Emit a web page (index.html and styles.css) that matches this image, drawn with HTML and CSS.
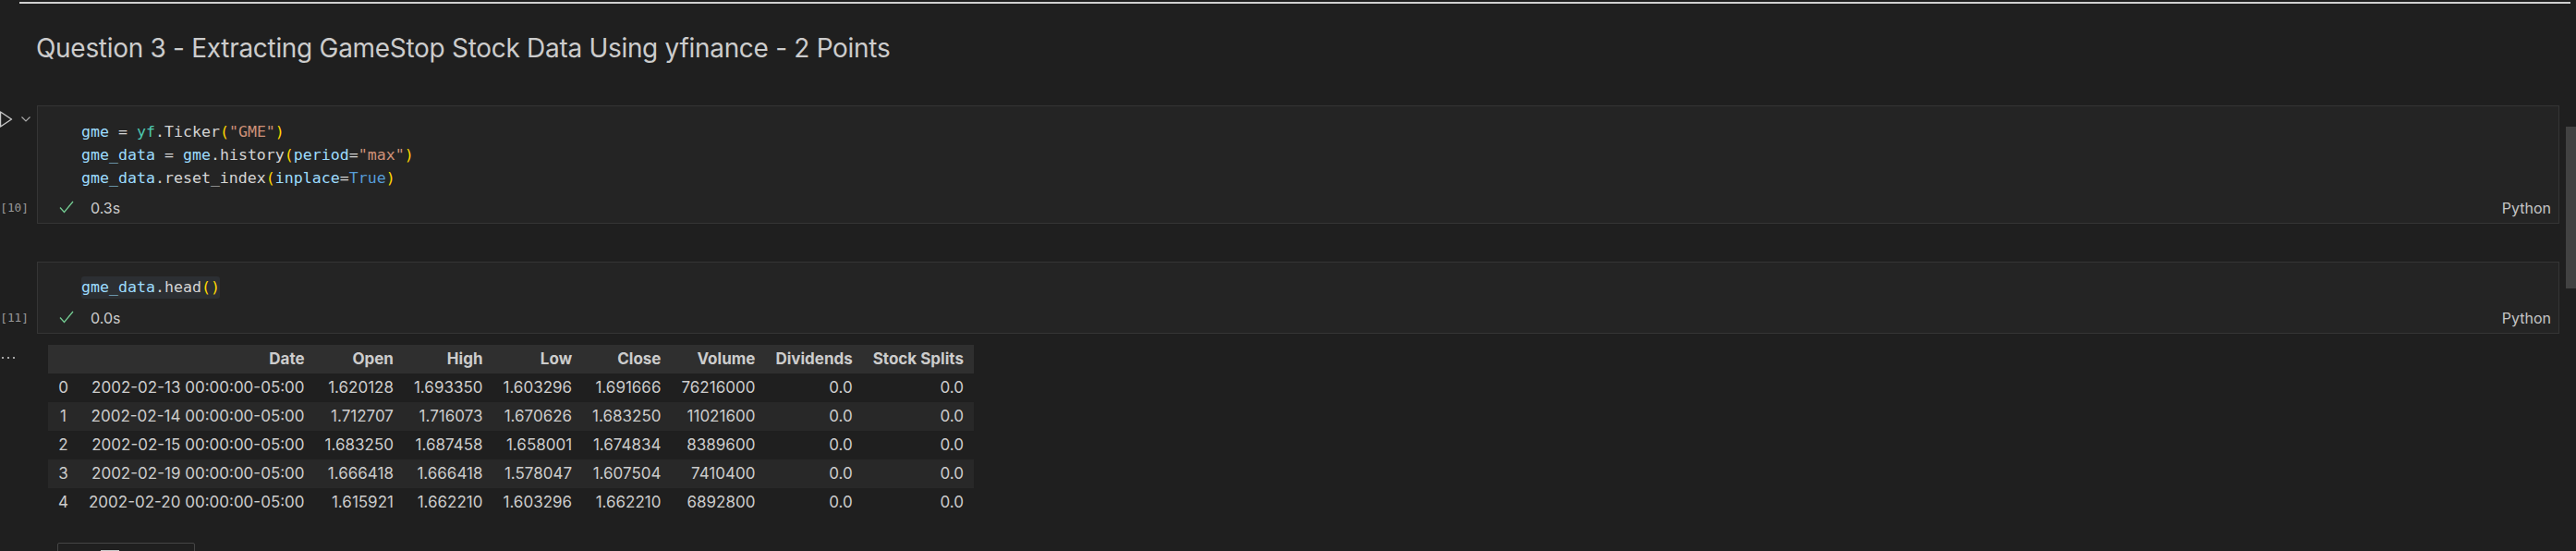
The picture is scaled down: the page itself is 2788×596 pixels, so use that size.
FILE: index.html
```html
<!DOCTYPE html>
<html lang="en">
<head>
<meta charset="utf-8">
<title>Notebook</title>
<link rel="stylesheet" href="styles.css">
</head>
<body>
<div class="page">
  <div class="rule"></div>
  <div class="md">
    <h2 class="md-title">Question 3 - Extracting GameStop Stock Data Using yfinance - 2 Points</h2>
  </div>

  <div class="cell-row first">
    <div class="gutter">
      <div class="run-tools">
        <svg class="run-icon" width="16" height="18" viewBox="0 0 16 18"><polygon points="1.5,1 13.5,9 1.5,17" fill="none" stroke="#c8c8c8" stroke-width="1.4" stroke-linejoin="round"/></svg>
        <svg class="chev-icon" width="12" height="8" viewBox="0 0 12 8"><polyline points="1.5,1.5 6,6 10.5,1.5" fill="none" stroke="#a8a8a8" stroke-width="1.2"/></svg>
      </div>
      <div class="count">[10]</div>
    </div>
    <div class="cell">
      <div class="code">
        <div class="ln"><span class="v">gme</span> <span class="p">=</span> <span class="m">yf</span><span class="p">.Ticker</span><span class="b">(</span><span class="s">"GME"</span><span class="b">)</span></div>
        <div class="ln"><span class="v">gme_data</span> <span class="p">=</span> <span class="v">gme</span><span class="p">.history</span><span class="b">(</span><span class="v">period</span><span class="p">=</span><span class="s">"max"</span><span class="b">)</span></div>
        <div class="ln"><span class="v">gme_data</span><span class="p">.reset_index</span><span class="b">(</span><span class="v">inplace</span><span class="p">=</span><span class="k">True</span><span class="b">)</span></div>
      </div>
      <div class="status">
        <svg class="check" width="16" height="14" viewBox="0 0 16 14"><polyline points="1,7.5 5.5,12.5 15,1" fill="none" stroke="#73c991" stroke-width="1.3"/></svg>
        <span class="time">0.3s</span>
        <span class="lang">Python</span>
      </div>
    </div>
  </div>

  <div class="cell-row second">
    <div class="gutter">
      <div class="run-tools"></div>
      <div class="count">[11]</div>
    </div>
    <div class="cell">
      <div class="code">
        <div class="ln"><span class="hl"><span class="v">gme_data</span><span class="p">.head</span><span class="b">()</span></span></div>
      </div>
      <div class="status">
        <svg class="check" width="16" height="14" viewBox="0 0 16 14"><polyline points="1,7.5 5.5,12.5 15,1" fill="none" stroke="#73c991" stroke-width="1.3"/></svg>
        <span class="time">0.0s</span>
        <span class="lang">Python</span>
      </div>
    </div>
  </div>

  <div class="output-row">
    <div class="out-gutter">
      <svg width="18" height="4" viewBox="0 0 18 4"><circle cx="3" cy="2" r="1.1" fill="#c8c8c8"/><circle cx="9" cy="2" r="1.1" fill="#c8c8c8"/><circle cx="15" cy="2" r="1.1" fill="#c8c8c8"/></svg>
    </div>
    <div class="output">
      <table class="df">
        <thead>
          <tr><th></th><th>Date</th><th>Open</th><th>High</th><th>Low</th><th>Close</th><th>Volume</th><th>Dividends</th><th>Stock Splits</th></tr>
        </thead>
        <tbody>
          <tr><td class="idx">0</td><td>2002-02-13 00:00:00-05:00</td><td>1.620128</td><td>1.693350</td><td>1.603296</td><td>1.691666</td><td>76216000</td><td>0.0</td><td>0.0</td></tr>
          <tr><td class="idx">1</td><td>2002-02-14 00:00:00-05:00</td><td>1.712707</td><td>1.716073</td><td>1.670626</td><td>1.683250</td><td>11021600</td><td>0.0</td><td>0.0</td></tr>
          <tr><td class="idx">2</td><td>2002-02-15 00:00:00-05:00</td><td>1.683250</td><td>1.687458</td><td>1.658001</td><td>1.674834</td><td>8389600</td><td>0.0</td><td>0.0</td></tr>
          <tr><td class="idx">3</td><td>2002-02-19 00:00:00-05:00</td><td>1.666418</td><td>1.666418</td><td>1.578047</td><td>1.607504</td><td>7410400</td><td>0.0</td><td>0.0</td></tr>
          <tr><td class="idx">4</td><td>2002-02-20 00:00:00-05:00</td><td>1.615921</td><td>1.662210</td><td>1.603296</td><td>1.662210</td><td>6892800</td><td>0.0</td><td>0.0</td></tr>
        </tbody>
      </table>
      <div class="wrangler">
        <svg class="wr-arrow" width="8" height="8" viewBox="0 0 8 8"><polyline points="1,6 4,2 7,6" fill="none" stroke="#c8c8c8" stroke-width="1.3"/></svg>
        <span class="wr-grid"></span>
        <svg class="wr-arrow" width="8" height="8" viewBox="0 0 8 8"><polyline points="1,6 4,2 7,6" fill="none" stroke="#c8c8c8" stroke-width="1.3"/></svg>
      </div>
    </div>
  </div>

  <div class="scrollbar"></div>
</div>
</body>
</html>
```

FILE: styles.css
```css
html, body {
  margin: 0;
  padding: 0;
  background: #1f1f1f;
}

.page {
  position: relative;
  width: 2788px;
  height: 596px;
  overflow: hidden;
  background: #1f1f1f;
  color: #cccccc;
  font-family: Inter, "Noto Sans", sans-serif;
}

.rule {
  height: 2px;
  margin: 2px 6px 0 21px;
  background: #cfcfcf;
}

.md {
  padding-left: 39px;
}

.md-title {
  margin: 30px 0 0 0;
  font-size: 28px;
  line-height: 36px;
  font-weight: 400;
  color: #cccccc;
  letter-spacing: -0.3px;
}

.cell-row {
  display: flex;
  margin-right: 18px;
}

.cell-row.first {
  margin-top: 44px;
}

.cell-row.second {
  margin-top: 41px;
}

.gutter {
  width: 40px;
  flex: none;
  display: flex;
  flex-direction: column;
  justify-content: space-between;
}

.run-tools {
  display: flex;
  align-items: flex-start;
  padding-top: 6px;
  height: 20px;
}

.run-icon {
  margin-left: -1px;
}

.chev-icon {
  margin-left: 7px;
  margin-top: 5px;
}

.count {
  font-family: "DejaVu Sans Mono", monospace;
  font-size: 12.8px;
  color: #9a9a9a;
  text-align: right;
  padding-right: 9px;
  line-height: 22px;
  margin-bottom: 6px;
  white-space: nowrap;
}

.cell {
  flex: 1;
  background: #242424;
  border: 1px solid #353535;
  padding: 15px 8px 5px 0;
}

.code {
  padding-left: 47px;
  font-family: "DejaVu Sans Mono", monospace;
  font-size: 16.6px;
  line-height: 25px;
  color: #d4d4d4;
}

.ln {
  height: 25px;
  white-space: pre;
}

.v { color: #9cdcfe; }
.p { color: #d4d4d4; }
.m { color: #4ec9b0; }
.s { color: #ce9178; }
.b { color: #ffd700; }
.k { color: #569cd6; }

.hl {
  display: inline-block;
  background: #2c2f33;
  border-radius: 3px;
  line-height: 24px;
  vertical-align: top;
}

.status {
  display: flex;
  align-items: center;
  height: 22px;
  margin-top: 9px;
  font-size: 16px;
  line-height: 22px;
  color: #cccccc;
}

.check {
  margin-left: 23px;
  margin-top: -2px;
}

.time {
  margin-left: 18px;
}

.lang {
  margin-left: auto;
  color: #c4c4c4;
}

.output-row {
  display: flex;
  margin-top: 12px;
}

.out-gutter {
  width: 40px;
  flex: none;
  padding-top: 12px;
}

.out-gutter svg {
  display: block;
}

.output {
  padding-left: 12px;
}

.df {
  border-collapse: collapse;
  font-size: 17px;
  line-height: 19px;
  color: #cccccc;
}

.df th {
  background: #2f2f2f;
  font-weight: 700;
  text-align: right;
  padding: 6px 11px;
  white-space: nowrap;
}

.df td {
  text-align: right;
  padding: 6px 11px;
  white-space: nowrap;
}

.df td.idx {
  text-align: center;
}

.df tbody tr:nth-child(even) {
  background: #282828;
}

.wrangler {
  display: flex;
  align-items: center;
  gap: 16px;
  width: 149px;
  height: 30px;
  margin: 28px 0 0 10px;
  border: 1px solid #454545;
  border-radius: 2px;
  padding: 0 22px;
  box-sizing: border-box;
  overflow: hidden;
}

.wr-grid {
  display: inline-block;
  width: 20px;
  height: 14px;
  border: 1.5px solid #c8c8c8;
  box-sizing: border-box;
  flex: none;
}

.wr-arrow {
  flex: none;
}

.wr-grid + .wr-arrow {
  margin-left: auto;
}

.scrollbar {
  position: absolute;
  right: 0;
  top: 137px;
  width: 11px;
  height: 175px;
  background: #424242;
}
```
